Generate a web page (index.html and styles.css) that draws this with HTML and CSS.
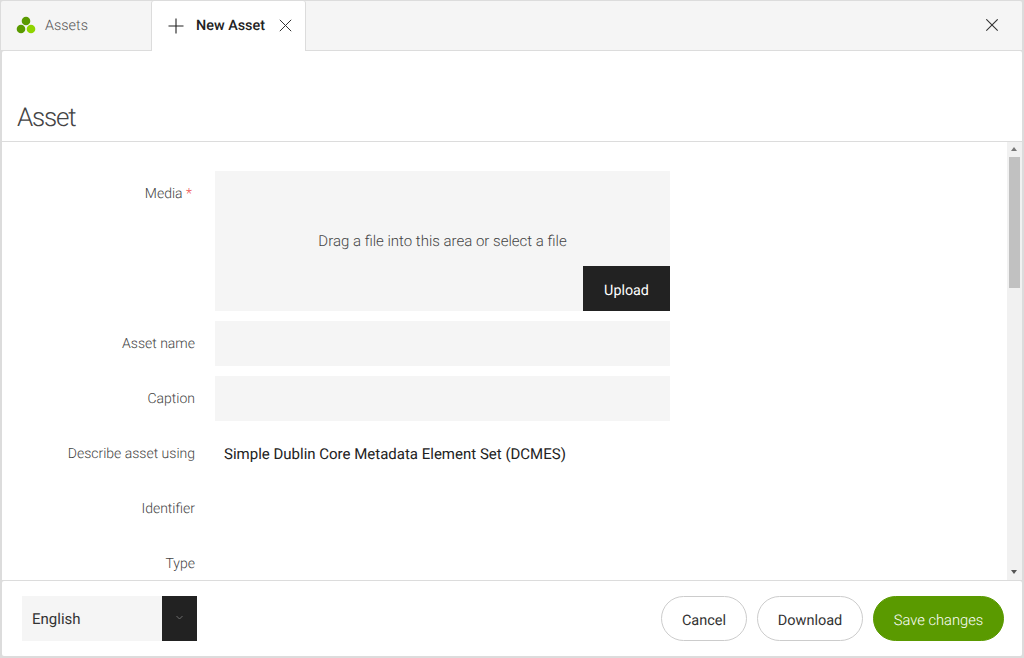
FILE: index.html
```html
<!DOCTYPE html>
<html lang="en">
<head>
<meta charset="utf-8">
<title>New Asset</title>
<link rel="stylesheet" href="styles.css">
</head>
<body>
<div class="window">
  <header class="tabbar">
    <div class="tab tab-assets">
      <svg class="logo" width="20" height="18" viewBox="0 0 20 18"><circle cx="10" cy="5" r="4.3" fill="#5a9a00"/><circle cx="5" cy="13" r="4.3" fill="#5a9a00"/><circle cx="15" cy="13" r="4.3" fill="#8fd400"/></svg>
      <span class="tab-label">Assets</span>
    </div>
    <div class="tab tab-new">
      <svg class="plus" width="16" height="16" viewBox="0 0 16 16"><path d="M8 0.5V15.5M0.5 8H15.5" stroke="#222" stroke-width="1.1" fill="none"/></svg>
      <span class="tab-title">New Asset</span>
      <svg class="x" width="13" height="13" viewBox="0 0 13 13"><path d="M0.8 0.8L12.2 12.2M12.2 0.8L0.8 12.2" stroke="#333" stroke-width="1" fill="none"/></svg>
    </div>
    <div class="tab-spacer"></div>
    <svg class="x close-all" width="13" height="13" viewBox="0 0 13 13"><path d="M0.3 0.3L11.7 11.7M11.7 0.3L0.3 11.7" stroke="#333" stroke-width="1.1" fill="none"/></svg>
  </header>

  <section class="title-panel">
    <h1>Asset</h1>
  </section>

  <main class="body-panel">
    <div class="form">
      <div class="row row-media">
        <label class="lab">Media <span class="req">*</span></label>
        <div class="drop">
          <p>Drag a file into this area or select a file</p>
          <button class="upload">Upload</button>
        </div>
      </div>
      <div class="row"><label class="lab">Asset name</label><div class="input"></div></div>
      <div class="row"><label class="lab">Caption</label><div class="input"></div></div>
      <div class="row"><label class="lab">Describe asset using</label><div class="value">Simple Dublin Core Metadata Element Set (DCMES)</div></div>
      <div class="row"><label class="lab">Identifier</label></div>
      <div class="row"><label class="lab">Type</label></div>
    </div>
    <div class="scrollbar">
      <div class="arrow-up"></div>
      <div class="track"><div class="thumb"></div></div>
      <div class="arrow-down"></div>
    </div>
  </main>

  <footer class="footer">
    <div class="select">
      <span class="select-value">English</span>
      <span class="select-btn"><svg width="7" height="5" viewBox="0 0 7 5"><path d="M0.5 1L3.5 4L6.5 1" stroke="#777" stroke-width="0.9" fill="none"/></svg></span>
    </div>
    <div class="actions">
      <button class="pill pill-cancel">Cancel</button>
      <button class="pill pill-download">Download</button>
      <button class="pill pill-save">Save changes</button>
    </div>
  </footer>
</div>
</body>
</html>
```
FILE: styles.css
```css
* { box-sizing: border-box; }
html, body { margin: 0; height: 100%; }
body {
  font-family: Roboto, "Liberation Sans", sans-serif;
  font-size: 14px;
  color: #222;
  background: #dcdcdc;
  overflow: hidden;
  text-rendering: geometricPrecision;
}
.window {
  width: 1024px;
  height: 658px;
  padding: 1px 2px 2px 2px;
  display: flex;
  flex-direction: column;
}
.tabbar {
  height: 49px;
  margin: 0 0 1px -1px;
  width: 1021px;
  background: #f5f5f5;
  border-radius: 2px 2px 0 0;
  display: flex;
  align-items: center;
  flex: none;
  position: relative;
}
.tab {
  height: 49px;
  display: flex;
  align-items: center;
}
.tab-assets {
  width: 150px;
  padding-left: 15px;
  color: #555;
  font-weight: 300;
  font-size: 14.4px;
}
.tab-label { margin-top: -1px; }
.logo { margin-right: 9px; margin-top: -1px; }
.tab-new {
  width: 153px;
  height: 50px;
  margin-left: 1px;
  margin-bottom: -1px;
  padding-left: 16px;
  background: #fff;
  border-radius: 2px 2px 0 0;
  box-shadow: 1px 0 0 #dcdcdc, -1px 0 0 #dcdcdc;
  position: relative;
  z-index: 1;
}
.plus { margin-right: 12px; margin-top: -1px; }
.tab-title { font-weight: 500; font-size: 14.4px; color: #222; margin-right: 14px; margin-top: -1px; }
.x { flex: none; margin-top: -1px; }
.tab-spacer { flex: 1; }
.close-all { margin-right: 23px; margin-top: -1px; }

.title-panel {
  height: 90px;
  background: #fff;
  border-radius: 2px 2px 0 0;
  flex: none;
  display: flex;
  align-items: flex-end;
  padding: 0 0 6px 15px;
}
h1 {
  margin: 0;
  font-size: 26px;
  line-height: 34px;
  font-weight: 300;
  color: #444;
  letter-spacing: -1.2px;
}
.body-panel {
  margin-top: 1px;
  height: 438px;
  background: #fff;
  flex: none;
  display: flex;
  overflow: hidden;
}
.form {
  flex: 1;
  padding-top: 29px;
  display: flex;
  flex-direction: column;
  gap: 10px;
  min-width: 0;
}
.row {
  display: flex;
  align-items: center;
  gap: 20px;
  height: 45px;
  flex: none;
}
.row-media { height: 140px; align-items: flex-start; }
.lab {
  width: 193px;
  text-align: right;
  flex: none;
  font-weight: 300;
  color: #444;
}
.row-media .lab { padding-right: 3px; line-height: 16px; padding-top: 15px; }
.req { color: #e55; }
.drop {
  width: 455px;
  height: 140px;
  background: #f5f5f5;
  position: relative;
  display: flex;
  justify-content: center;
  padding-top: 62px;
}
.drop p {
  margin: 0;
  font-weight: 300;
  font-size: 15px;
  color: #444;
  line-height: 16px;
}
.upload {
  position: absolute;
  right: 0;
  bottom: 0;
  width: 87px;
  height: 45px;
  border: 0;
  background: #222;
  color: #fff;
  font: 400 14.3px Roboto, sans-serif;
  padding: 4px 0 0;
  text-rendering: geometricPrecision;
}
.input { width: 455px; height: 45px; background: #f5f5f5; }
.value { padding-left: 9px; color: #222; font-size: 15px; }

.scrollbar {
  width: 15px;
  flex: none;
  background: #f1f1f1;
  display: flex;
  flex-direction: column;
  align-items: center;
}
.arrow-up, .arrow-down {
  width: 15px;
  height: 15px;
  flex: none;
  position: relative;
}
.arrow-up::after, .arrow-down::after {
  content: "";
  position: absolute;
  left: 4px;
  top: 5px;
  border-left: 3.5px solid transparent;
  border-right: 3.5px solid transparent;
}
.arrow-up::after { border-bottom: 4px solid #777; }
.arrow-down::after { border-top: 4px solid #555; }
.track { flex: 1; width: 11px; }
.thumb { width: 11px; height: 131px; background: #c1c1c1; }

.footer {
  height: 75px;
  margin-top: 1px;
  background: #fff;
  flex: none;
  display: flex;
  align-items: flex-start;
  justify-content: space-between;
  padding: 15px 18px 0 20px;
  border-radius: 2px;
}
.select { display: flex; height: 45px; width: 175px; }
.select-value {
  width: 140px;
  background: #f5f5f5;
  padding: 1px 0 0 10px;
  line-height: 45px;
  font-size: 15px;
  color: #333;
}
.select-btn {
  width: 35px;
  background: #222;
  display: flex;
  align-items: center;
  justify-content: center;
  padding-bottom: 2px;
}
.actions { display: flex; gap: 10px; }
.pill {
  height: 45px;
  border-radius: 23px;
  font: 400 14.5px Roboto, sans-serif;
  padding: 4px 0 0;
  background: #fff;
  color: #333;
  border: 1px solid #ccc;
  text-rendering: geometricPrecision;
}
.pill-cancel { width: 86px; }
.pill-download { width: 106px; }
.pill-save { width: 131px; padding-top: 2px; background: #5a9a00; border-color: #5a9a00; color: #fff; font-weight: 300; font-size: 14.7px; }
```
